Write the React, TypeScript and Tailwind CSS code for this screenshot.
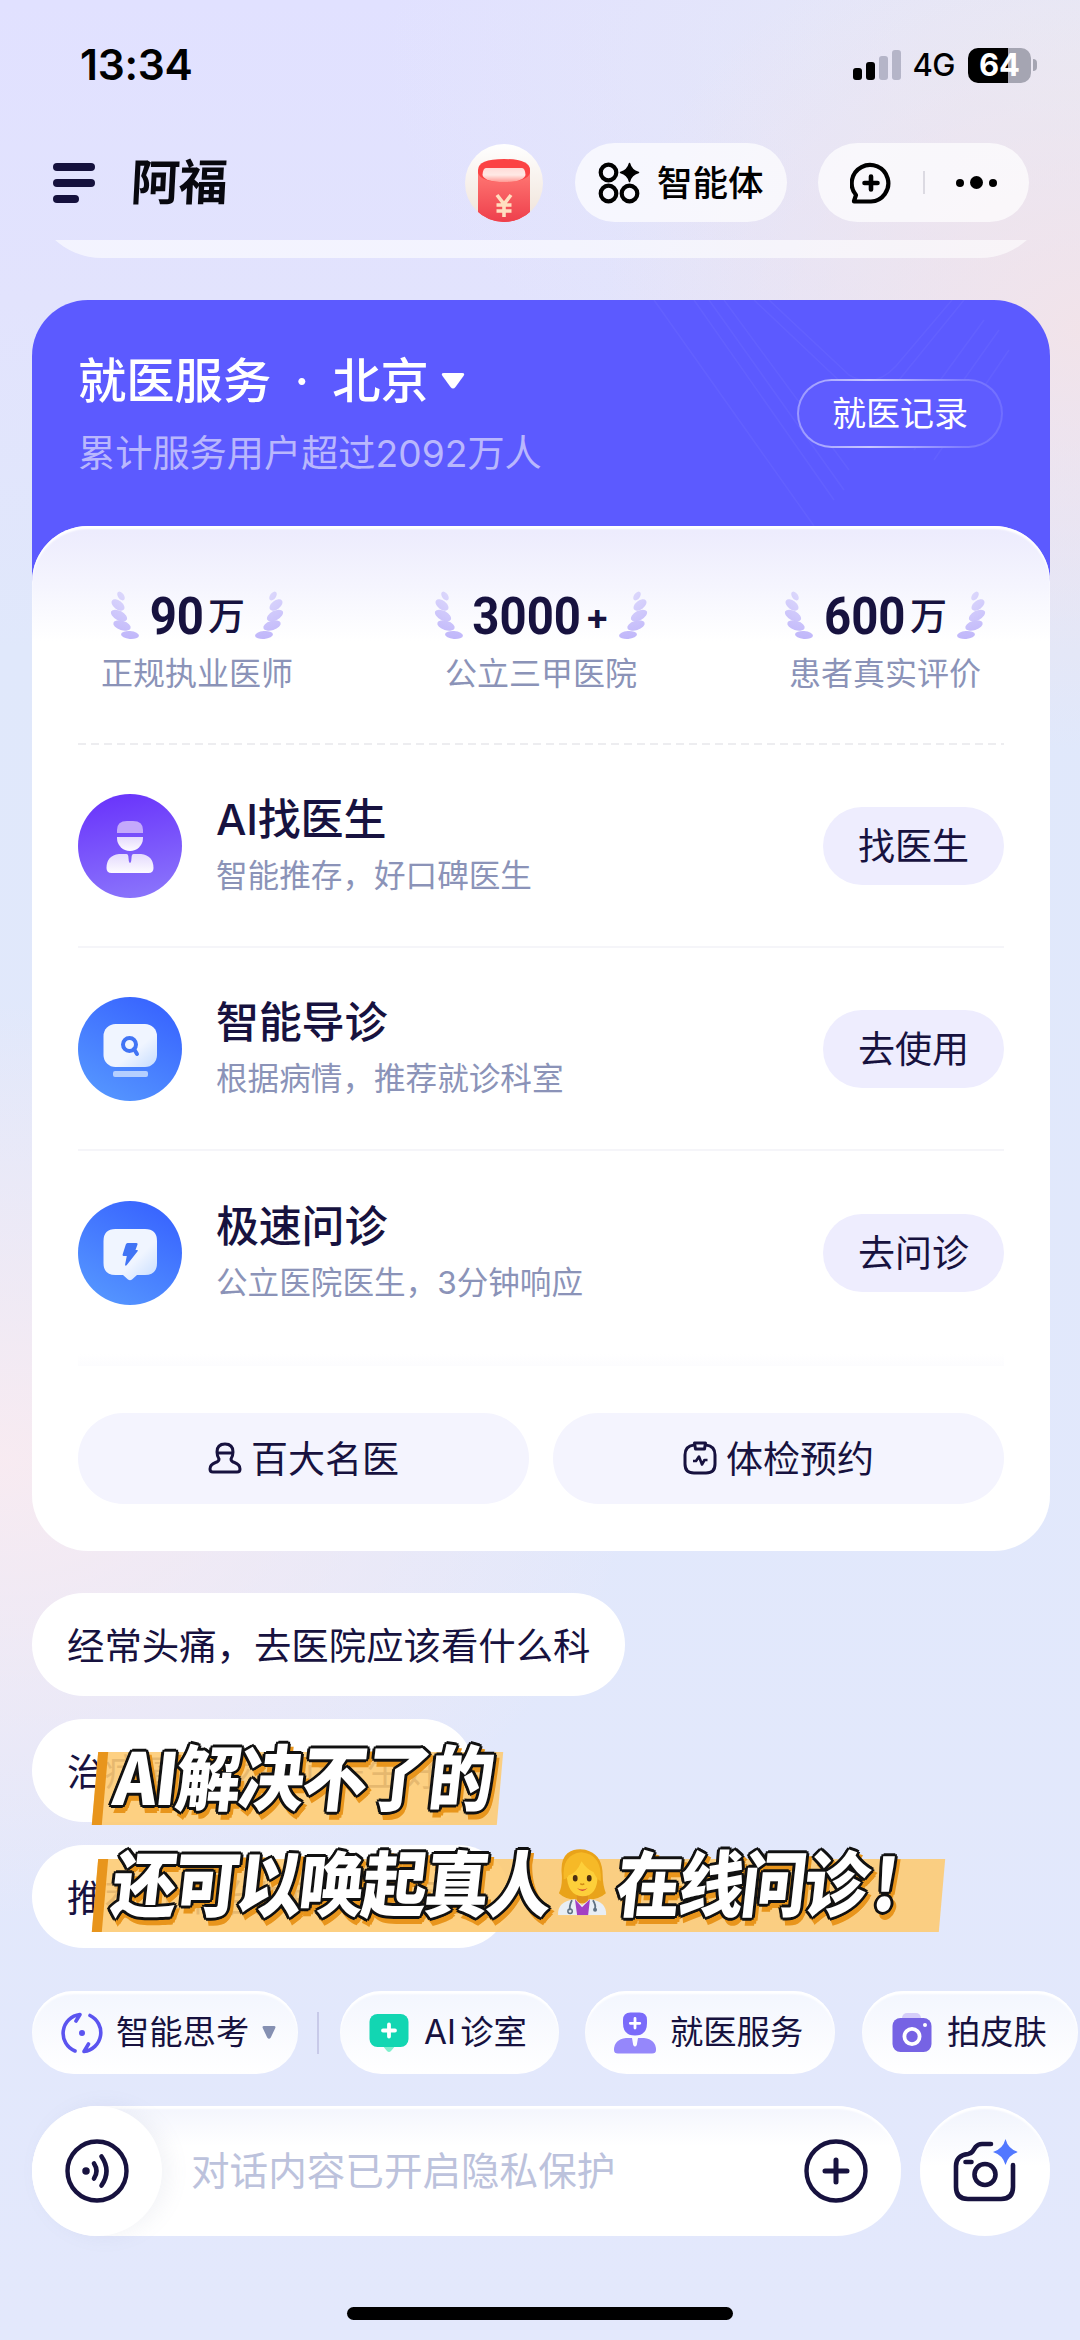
import type { ReactNode } from "react"

interface Stat {
  value: string
  unit: string
  label: string
  digitsClass: string
}

interface Service {
  title: string
  desc: string
  action: string
  icon: ReactNode
}

const stats: Stat[] = [
  { value: "90", unit: "万", label: "正规执业医师", digitsClass: "w-[55px]" },
  { value: "3000", unit: "+", label: "公立三甲医院", digitsClass: "w-[108px]" },
  { value: "600", unit: "万", label: "患者真实评价", digitsClass: "w-[83px]" },
]

const services: Service[] = [
  { title: "AI找医生", desc: "智能推存，好口碑医生", action: "找医生", icon: <DoctorIcon /> },
  { title: "智能导诊", desc: "根据病情，推荐就诊科室", action: "去使用", icon: <GuideIcon /> },
  { title: "极速问诊", desc: "公立医院医生，3分钟响应", action: "去问诊", icon: <FlashIcon /> },
]

function DoctorIcon() {
  return (
    <svg viewBox="0 0 104 104" className="h-[104px] w-[104px]">
      <defs>
        <linearGradient id="doc-bg" x1="0.4" y1="0" x2="0.6" y2="1">
          <stop offset="0" stopColor="#6a35fb" />
          <stop offset="1" stopColor="#8a74fb" />
        </linearGradient>
        <linearGradient id="doc-fg" x1="0" y1="0" x2="0" y2="1">
          <stop offset="0" stopColor="#e4dafd" />
          <stop offset="1" stopColor="#fdfbff" />
        </linearGradient>
      </defs>
      <circle cx="52" cy="52" r="52" fill="url(#doc-bg)" />
      <path d="M39 39 v-3 q0 -9 10 -9 h6 q10 0 10 9 v3 z" fill="#c4a9fb" />
      <path d="M39 43 h26 v1 a13 13 0 0 1 -26 0 z" fill="url(#doc-fg)" />
      <path
        d="M41 60 h7.500 q1.500 0 1.800 2 l0.500 5 q1.200 4 2.400 0 l0.500 -5 q0.300 -2 1.800 -2 h7.500 q12.500 1.500 12.500 14 q0 5 -5 5 h-37 q-5 0 -5 -5 q0 -12.500 12.500 -14 z"
        fill="url(#doc-fg)"
      />
    </svg>
  )
}

function BlueDefs({ id }: { id: string }) {
  return (
    <defs>
      <linearGradient id={id} x1="0.8" y1="0" x2="0.25" y2="1">
        <stop offset="0" stopColor="#3762ff" />
        <stop offset="1" stopColor="#5596ff" />
      </linearGradient>
      <linearGradient id={`${id}-fg`} x1="0" y1="0" x2="1" y2="1">
        <stop offset="0.6" stopColor="#f0f5ff" />
        <stop offset="1" stopColor="#c5dcff" />
      </linearGradient>
    </defs>
  )
}

function GuideIcon() {
  return (
    <svg viewBox="0 0 104 104" className="h-[104px] w-[104px]">
      <BlueDefs id="guide" />
      <circle cx="52" cy="52" r="52" fill="url(#guide)" />
      <rect x="25.500" y="27" width="53.500" height="43" rx="12" fill="url(#guide-fg)" />
      <rect x="35" y="74" width="35" height="6" rx="2" fill="#b5cfff" />
      <circle cx="51.500" cy="47.500" r="6.500" fill="none" stroke="#4174f5" strokeWidth="4" />
      <path d="M56 52 l3 5" stroke="#4174f5" strokeWidth="4" strokeLinecap="round" />
    </svg>
  )
}

function FlashIcon() {
  return (
    <svg viewBox="0 0 104 104" className="h-[104px] w-[104px]">
      <BlueDefs id="flash" />
      <circle cx="52" cy="52" r="52" fill="url(#flash)" />
      <path
        d="M37.500 28 h29.500 q12 0 12 12 v22 q0 12 -12 12 h-8 l-5 4.500 q-2 1.600 -4 0 l-5 -4.500 h-7.500 q-12 0 -12 -12 v-22 q0 -12 12 -12 z"
        fill="url(#flash-fg)"
      />
      <path
        d="M49.500 42 h9 q1.500 0 1 1.500 l-2 5.500 h1.500 q1.500 0 0.600 1.300 l-11 14 q-1.500 1.200 -1.500 -0.800 l1.700 -8.500 h-3 q-1.500 0 -1.200 -1.500 l3.200 -10 q0.500 -1.500 1.700 -1.500 z"
        fill="#4174f5"
      />
    </svg>
  )
}

function Wreath({ className = "", id }: { className?: string; id: string }) {
  return (
    <svg viewBox="0 0 30 50" className={`h-[50px] w-[30px] shrink-0 ${className}`}>
      <defs>
        <linearGradient id={id} x1="0" y1="0" x2="0" y2="50" gradientUnits="userSpaceOnUse">
          <stop offset="0" stopColor="#dcd8fc" />
          <stop offset="1" stopColor="#bfb5fa" />
        </linearGradient>
      </defs>
      <g fill={`url(#${id})`}>
        <ellipse cx="11" cy="5" rx="5" ry="3" transform="rotate(55 11 5)" />
        <ellipse cx="8" cy="14" rx="7.500" ry="4.300" transform="rotate(38 8 14)" />
        <ellipse cx="9" cy="24.500" rx="8.800" ry="4.700" transform="rotate(28 9 24.500)" />
        <ellipse cx="12" cy="34.500" rx="9" ry="4.600" transform="rotate(17 12 34.500)" />
        <ellipse cx="20" cy="44" rx="9" ry="3.900" transform="rotate(4 20 44)" />
      </g>
    </svg>
  )
}

function DoctorEmoji() {
  return (
    <svg viewBox="0 0 50 66" role="img" aria-label="👩‍⚕️" className="h-[66px] w-[50px]">
      <path d="M11 4 Q22 -3 33 2 Q46 7 46 26 Q46 36 49 44 Q40 52 25 50 Q10 52 2 44 Q6 36 5 24 Q4 10 11 4 z" fill="#e9a31a" />
      <path d="M20 42 h11 v12 h-11 z" fill="#e0921d" />
      <path d="M1 66 Q0 52 18 50 L25 56 L33 50 Q50 52 49 66 z" fill="#e8eef5" />
      <path d="M18 50 L25 58 L33 50 L31 66 H20 z" fill="#a33fc4" />
      <path d="M10 24 Q10 8 25 8 Q41 8 41 25 Q41 47 25.500 47 Q10 46 10 24 z" fill="#fdcf3a" />
      <path d="M7 30 Q5 5 25 3 Q46 5 44 32 Q40 30 37 23 Q30 20 25 12 Q20 24 12 26 Q10 30 7 30 z" fill="#f6b927" />
      <ellipse cx="18.500" cy="29" rx="2.400" ry="3.200" fill="#4c2f12" />
      <ellipse cx="32.500" cy="29" rx="2.400" ry="3.200" fill="#4c2f12" />
      <path d="M23.500 34.500 q2 1.500 4 0" stroke="#d08a17" strokeWidth="1.500" fill="none" />
      <path d="M20 38.500 q5.500 3.800 11 0 q-5.500 6.500 -11 0 z" fill="#d5473a" />
      <path d="M15 51 q-3 6 -2 10 M36 51 q3 5 2 8" stroke="#5f7183" strokeWidth="1.800" fill="none" />
      <circle cx="13" cy="62" r="2.200" fill="none" stroke="#5f7183" strokeWidth="1.500" />
      <circle cx="38" cy="60.500" r="2" fill="#5f7183" />
    </svg>
  )
}

function StatusBar() {
  return (
    <div className="flex h-[130px] shrink-0 items-center justify-between pl-[80px] pr-[43px] text-black">
      <span className="text-[42.500px] font-semibold tracking-[-0.300px]">13:34</span>
      <div className="flex items-center">
        <div className="flex h-[30px] items-end gap-1">
          <span className="h-3 w-[9px] rounded-[3px] bg-black" />
          <span className="h-[18px] w-[9px] rounded-[3px] bg-black" />
          <span className="h-6 w-[9px] rounded-[3px] bg-[#b5b5c8]" />
          <span className="h-[30px] w-[9px] rounded-[3px] bg-[#b5b5c8]" />
        </div>
        <span className="ml-[11px] text-[31px] font-medium tracking-[-0.500px]">4G</span>
        <div className="ml-[13px] flex h-[35px] w-[63px] items-center justify-center rounded-[10px] bg-[linear-gradient(90deg,#000_0_64%,#a5a5b2_64%)] text-[31px] font-bold text-white">
          64
        </div>
        <span className="ml-[2px] h-[12px] w-[4px] rounded-r-full bg-[#a5a5b2]" />
      </div>
    </div>
  )
}

function Header() {
  return (
    <div className="mt-[13px] flex h-[79px] shrink-0 items-center pl-[53px] pr-[51px]">
      <div className="flex flex-col gap-2">
        <span className="h-2 w-[42px] rounded-full bg-[#15113d]" />
        <span className="h-2 w-[42px] rounded-full bg-[#15113d]" />
        <span className="h-2 w-[26px] rounded-full bg-[#15113d]" />
      </div>
      <span className="ml-[36px] -skew-x-3 text-[49px] font-bold leading-[60px] tracking-[-1px] text-[#08080f]">阿福</span>

      <svg viewBox="0 0 78 78" className="ml-auto h-[78px] w-[78px]">
        <defs>
          <clipPath id="packet-clip">
            <circle cx="39" cy="39" r="39" />
          </clipPath>
          <linearGradient id="packet-bg" x1="0" y1="0" x2="0" y2="1">
            <stop offset="0" stopColor="#ffffff" />
            <stop offset="1" stopColor="#efe2d8" />
          </linearGradient>
          <linearGradient id="packet-body" x1="0" y1="0" x2="0" y2="1">
            <stop offset="0" stopColor="#ff7672" />
            <stop offset="1" stopColor="#ee3f4c" />
          </linearGradient>
          <linearGradient id="packet-lip" x1="0" y1="0" x2="0" y2="1">
            <stop offset="0" stopColor="#ffdcd8" />
            <stop offset="0.5" stopColor="#ffe9e5" />
            <stop offset="1" stopColor="#ff9a94" />
          </linearGradient>
        </defs>
        <g clipPath="url(#packet-clip)">
          <rect width="78" height="78" fill="url(#packet-bg)" />
          <path d="M13 26 q0 -11 26 -11 q26 0 26 11 v52 h-52 z" fill="#fb4344" />
          <path d="M13 29 q3 9 26 9 q23 0 26 -9 v49 h-52 z" fill="url(#packet-body)" />
          <path d="M21 24 h36 q3 0 3.500 7 q-2 7 -21.500 7 q-19.500 0 -21.500 -7 q0.500 -7 3.500 -7 z" fill="url(#packet-lip)" />
          <path d="M32 51 l7 9 l7 -9 M39 60 v13 M31.500 61 h15 M31.500 67 h15" fill="none" stroke="#ffdfc0" strokeWidth="3.600" />
        </g>
      </svg>

      <div className="ml-[32px] flex h-[79px] w-[212px] items-center rounded-full bg-white/70 pl-[23px]">
        <svg viewBox="0 0 42 42" className="h-[42px] w-[42px]" fill="none" stroke="#000" strokeWidth="4.200">
          <circle cx="10.500" cy="10.500" r="7.800" />
          <circle cx="10.500" cy="31.500" r="7.800" />
          <circle cx="31.500" cy="31.500" r="7.800" />
          <path
            d="M31.500 1.500 q1.800 7.200 9 9 q-7.200 1.800 -9 9 q-1.800 -7.200 -9 -9 q7.200 -1.800 9 -9 z"
            fill="#000"
            strokeWidth="1.500"
            strokeLinejoin="round"
          />
        </svg>
        <span className="ml-[17px] pt-[2px] text-[35.500px] font-medium text-black">智能体</span>
      </div>

      <div className="ml-[31px] flex h-[79px] w-[211px] items-center rounded-full bg-white/70 pl-[32px]">
        <svg
          viewBox="0 0 42 42"
          className="h-[42px] w-[42px]"
          fill="none"
          stroke="#000"
          strokeWidth="4.200"
          strokeLinejoin="round"
          strokeLinecap="round"
        >
          <path d="M4 39.500 v-0.500 l2 -6 a18.300 18.300 0 1 1 15 6.500 z" />
          <path d="M21 14.500 v13 M14.500 21 h13" strokeWidth="4.600" />
        </svg>
        <span className="ml-[31px] h-[23px] w-[2px] bg-[#dcdae2]" />
        <div className="ml-[31px] flex items-center gap-[6px]">
          <span className="h-2 w-2 rounded-full bg-black" />
          <span className="h-[13px] w-[13px] rounded-full bg-black" />
          <span className="h-2 w-2 rounded-full bg-black" />
        </div>
      </div>
    </div>
  )
}

function CardHeader() {
  return (
    <div className="relative flex h-[226px] justify-between pl-[46px] pr-[47px]">
      <svg viewBox="0 0 400 226" className="absolute right-4 top-0 h-[226px] w-[400px]" fill="none" stroke="#6d6bff" strokeWidth="1.500" opacity="0.4">
        <path d="M20 0 L180 226 M60 0 L200 200 M75 0 L210 190 M90 0 L215 170 M120 0 L215 90 Q240 105 265 80 L330 0 M135 0 L215 75 Q240 90 262 66 L318 0 M350 20 L270 130 M365 30 L280 150 M375 50 L300 160" />
      </svg>
      <div className="relative pt-[46px]">
        <div className="flex items-center text-[48.300px] font-medium leading-[70px] text-white">
          <span>就医服务</span>
          <span className="w-[61px] text-center">·</span>
          <span>北京</span>
          <svg viewBox="0 0 24 18" className="ml-[12px] h-[18px] w-6" fill="#fff">
            <path d="M3 1 h18 q3.500 0 1.500 3 l-8 11 q-2.500 3 -5 0 l-8 -11 q-2 -3 1.500 -3 z" />
          </svg>
        </div>
        <div className="mt-[11px] text-[37.200px] leading-[54px] text-[#b9b7fd]">累计服务用户超过2092万人</div>
      </div>
      <div className="relative mt-[79px] h-[69px] w-[206px] rounded-full bg-[linear-gradient(90deg,#9a98ff,#c9c8ff_35%,#7f7dff_80%,#706eff)] p-[2px]">
        <div className="flex h-full items-center justify-center rounded-full bg-[#5f5cff] text-[34px] text-white">就医记录</div>
      </div>
    </div>
  )
}

function StatsRow() {
  return (
    <div className="flex justify-between px-6 pt-[63px]">
      {stats.map((stat) => (
        <div key={stat.label} className="flex w-[190px] flex-col items-center">
          <div className="flex h-[54px] items-center">
            <Wreath id={`wreath-l-${stat.value}`} />
            <div className="mx-[9px] flex items-center text-[#17123f]">
              <span className={`flex justify-center ${stat.digitsClass}`}>
                <span className="scale-x-[0.91] pt-[2px] font-['Roboto'] text-[52px] font-bold leading-[54px]">{stat.value}</span>
              </span>
              <span
                className={
                  stat.unit === "+"
                    ? "ml-[4px] w-[24px] text-center text-[36px] font-bold leading-[54px]"
                    : "ml-1 pt-[2px] text-[37px] font-medium leading-[54px]"
                }
              >
                {stat.unit}
              </span>
            </div>
            <Wreath id={`wreath-r-${stat.value}`} className="-scale-x-100" />
          </div>
          <span className="mt-[9px] whitespace-nowrap text-[32px] leading-[44px] text-[#8b93b8]">{stat.label}</span>
        </div>
      ))}
    </div>
  )
}

function ServiceCard() {
  return (
    <section className="mx-[32px] mt-[42px] h-[1251px] w-[1018px] shrink-0 rounded-t-[56px] rounded-b-[66px] bg-[linear-gradient(#5c5aff_0_340px,transparent_340px)]">
      <CardHeader />
      <div className="flex h-[1025px] flex-col rounded-[56px] bg-[linear-gradient(#ecebfd,#f5f5fe_60px,#fff_115px)] px-[46px] shadow-[inset_0_3px_2px_#fff]">
        <StatsRow />
        <div className="mt-[47px] h-[2px] shrink-0 bg-[repeating-linear-gradient(90deg,#ededf0_0_8px,transparent_8px_13px)]" />

        {services.map((service, i) => (
          <div key={service.title} className={`flex h-[203px] items-center ${i < 2 ? "border-b-2 border-[#f5f5f9]" : ""}`}>
            {service.icon}
            <div className="ml-[34px] flex flex-col">
              <span className="text-[43px] font-medium leading-[56px] tracking-[-0.200px] text-[#17123f]">{service.title}</span>
              <span className="mt-[5px] text-[31.600px] leading-[48px] text-[#8b93b8]">{service.desc}</span>
            </div>
            <button className="ml-auto h-[78px] w-[181px] rounded-full bg-[#eeedfe] pt-[2px] text-[37px] text-[#17123f]">
              {service.action}
            </button>
          </div>
        ))}

        <div className="h-3 bg-[linear-gradient(#fff,#fcfcfe)]" />

        <div className="mt-[47px] flex gap-[24px] text-[37px] text-[#17123f]">
          <button className="flex h-[91px] flex-1 items-center justify-center rounded-full bg-[#f4f4fe] pt-[2px]">
            <svg viewBox="0 0 34 32" className="mb-[3px] mr-[9px] h-[32px] w-[34px]" fill="none" stroke="#17123f" strokeWidth="3">
              <path d="M9 10 q0 -8 8 -8 q8 0 8 8 q0 4 -2 7 q0 2.500 3.500 3.500 q5.500 2 5.500 6.500 q0 3 -3 3 h-24 q-3 0 -3 -3 q0 -4.500 5.500 -6.500 q3.500 -1 3.500 -3.500 q-2 -3 -2 -7 z M9 11 h16" />
            </svg>
            百大名医
          </button>
          <button className="flex h-[91px] flex-1 items-center justify-center rounded-full bg-[#f4f4fe] pt-[2px]">
            <svg viewBox="0 0 34 34" className="mb-[3px] mr-[9px] h-[34px] w-[34px]" fill="none" stroke="#17123f" strokeWidth="3" strokeLinejoin="round">
              <path d="M11 4 q-9 1 -9 10 v9 q0 9 9 9 h12 q9 0 9 -9 v-9 q0 -9 -9 -10" />
              <path d="M11.500 2 h11 l-1 6 h-9 z" />
              <path d="M10 20 h3 l3 -4.500 l3 8 l2.500 -4.500 h3" strokeWidth="2.600" />
            </svg>
            体检预约
          </button>
        </div>
      </div>
    </section>
  )
}

function SuggestionList() {
  const chip = "flex h-[103px] items-center whitespace-nowrap rounded-full bg-white pl-[35px] pt-[5px] text-[37.400px] text-[#17123f]"
  return (
    <div className="mt-[42px] flex shrink-0 flex-col gap-[23px] pl-[32px]">
      <div className={`${chip} w-[593px]`}>经常头痛，去医院应该看什么科</div>
      <div className={`${chip} w-[442px]`}>治疗痛风找哪个医生好</div>
      <div className={`${chip} w-[478px]`}>推荐几个治失眠的好医生</div>
    </div>
  )
}

// Caption sticker floating over the suggestions
function Caption() {
  const outline =
    "relative whitespace-nowrap font-black text-white [text-shadow:3px_0_0_#111,-3px_0_0_#111,0_3px_0_#111,0_-3px_0_#111,2px_2px_0_#111,-2px_2px_0_#111,2px_-2px_0_#111,-2px_-2px_0_#111,5px_6px_0_#e8951c,6px_3px_0_#e8951c,3px_7px_0_#e8951c]"
  const bar = "absolute -skew-x-[5deg] border-l-[10px] border-[#e8951c] bg-[#fdcb74]/90"
  return (
    <div className="absolute left-0 top-[1730px] h-[210px] w-full font-['Noto_Sans_CJK_SC',sans-serif]">
      <div className={`${bar} left-[95px] top-[22px] h-[73px] w-[405px]`} />
      <div className={`${bar} left-[95px] top-[129px] h-[73px] w-[847px]`} />
      <div className="absolute left-[115px] top-[2px] -skew-x-[7deg] scale-y-[1.1] text-[65px] leading-[84px]">
        <span className={`${outline} tracking-[-1.800px]`}>AI解决不了的</span>
      </div>
      <div className="absolute left-[113px] top-[108px] flex -skew-x-[7deg] scale-y-[1.1] items-center text-[65px] leading-[84px]">
        <span className={`${outline} tracking-[-2.500px]`}>还可以唤起真人</span>
        <span className="relative ml-[6px] mr-[11px] mt-[4px] scale-y-[0.91] skew-x-[7deg]">
          <DoctorEmoji />
        </span>
        <span className={`${outline} tracking-[-2.500px]`}>在线问诊</span>
        <span className={`${outline} ml-[6px]`}>!</span>
      </div>
    </div>
  )
}

function Toolbar() {
  const chip =
    "flex h-[83px] shrink-0 items-center whitespace-nowrap rounded-full bg-[linear-gradient(#f3f6fe,#fff)] text-[33.300px] text-[#17123f] shadow-[inset_0_3px_2px_#fff]"
  return (
    <div className="mt-[43px] flex shrink-0 items-center overflow-hidden pl-[32px]">
      <div className={`${chip} w-[266px] pl-[27px]`}>
        <svg viewBox="0 0 46 42" className="h-[42px] w-[46px]" fill="none" stroke="#5b54f0" strokeWidth="3.600" strokeLinecap="round" strokeLinejoin="round">
          <path d="M16 39 A19 19 0 0 1 21 2.500 L17 9" />
          <path d="M31 3.500 A19 19 0 0 1 25 39.500 L29.500 32" />
          <circle cx="23" cy="21" r="1.500" fill="#5b54f0" strokeWidth="3" />
        </svg>
        <span className="ml-[11px]">智能思考</span>
        <svg viewBox="0 0 14 13" className="ml-[13px] h-[13px] w-[14px]" fill="#8590b2">
          <path d="M2 0 h10 q2 0 1.300 2 l-4.500 9.500 q-1.800 2.500 -3.600 0 l-4.500 -9.500 q-0.700 -2 1.300 -2 z" />
        </svg>
      </div>
      <span className="ml-[19px] h-[42px] w-[2px] bg-[#c8cae9]" />
      <div className={`${chip} ml-[21px] w-[219px] pl-[29px]`}>
        <svg viewBox="0 0 40 38" className="h-[38px] w-10">
          <path d="M13 31 h14 l-5 6 q-2 2 -4 0 z" fill="#7df0cd" />
          <rect x="0.500" y="0" width="39" height="33" rx="8" fill="#12d6b2" />
          <path d="M20 10.500 v12 M14 16.500 h12" stroke="#fff" strokeWidth="3.800" strokeLinecap="round" />
        </svg>
        <span className="ml-[15px] [word-spacing:-5px]">AI 诊室</span>
      </div>
      <div className={`${chip} ml-[26px] w-[250px] pl-[29px]`}>
        <svg viewBox="0 0 42 42" className="h-[42px] w-[42px]">
          <path d="M9 8 q0 -7.500 7.500 -7.500 h9 q7.500 0 7.500 7.500 v3 q0 12.500 -12 12.500 q-12 0 -12 -12.500 z" fill="#7a6bfa" />
          <path d="M21 6.500 v9.500 M16.300 11.300 h9.500" stroke="#fff" strokeWidth="2.800" strokeLinecap="round" />
          <path d="M12 26 h6 l1.200 7 q1.800 3 3.600 0 l1.200 -7 h6 q12 1.500 12 12 q0 3.500 -4 3.500 h-34 q-4 0 -4 -3.500 q0 -10.500 12 -12 z" fill="#9587fb" />
        </svg>
        <span className="ml-[14px]">就医服务</span>
      </div>
      <div className={`${chip} ml-[27px] w-[216px] pl-[30px]`}>
        <svg viewBox="0 0 40 40" className="h-10 w-10">
          <rect x="10" y="0" width="19" height="12" rx="5" fill="#d5cdfa" />
          <rect x="0.500" y="5" width="39" height="34" rx="8" fill="#7663e4" />
          <circle cx="20" cy="23.500" r="7.600" fill="none" stroke="#fff" strokeWidth="3.800" />
          <circle cx="33" cy="12" r="2" fill="#fff" />
        </svg>
        <span className="ml-[15px]">拍皮肤</span>
      </div>
    </div>
  )
}

function InputBar() {
  return (
    <div className="mt-[32px] flex h-[130px] shrink-0 gap-[19px] pl-[32px]">
      <div className="flex w-[869px] items-center rounded-full bg-[linear-gradient(#f3f5fd,#fff_40px)] shadow-[inset_0_3px_2px_#fff]">
        <div className="flex h-[130px] w-[130px] items-center justify-center rounded-full bg-white shadow-[8px_0_20px_rgba(120,130,170,0.09)]">
          <svg viewBox="0 0 64 64" className="h-[64px] w-[64px]" fill="none" stroke="#17123f" strokeWidth="4.400" strokeLinecap="round">
            <circle cx="32" cy="32" r="29.500" />
            <circle cx="21" cy="32" r="2" fill="#17123f" strokeWidth="3.500" />
            <path d="M29 24.500 q5 7.500 0 15 M36.500 17.500 q10 14.500 0 29" strokeWidth="4.600" />
          </svg>
        </div>
        <span className="ml-[29px] pt-[2px] text-[38.600px] text-[#bcc2dc]">对话内容已开启隐私保护</span>
        <svg viewBox="0 0 64 64" className="ml-auto mr-[33px] h-[64px] w-[64px]" fill="none" stroke="#17123f" strokeWidth="4.400" strokeLinecap="round">
          <circle cx="32" cy="32" r="29.500" />
          <path d="M32 21 v22 M21 32 h22" strokeWidth="5" />
        </svg>
      </div>
      <div className="flex w-[130px] items-center justify-center rounded-full bg-[linear-gradient(#f1f4fd,#fff_60px)] shadow-[inset_0_3px_2px_#fff]">
        <svg viewBox="0 0 66 64" className="h-[64px] w-[66px]" fill="none" stroke="#17123f" strokeWidth="4.600" strokeLinecap="round">
          <path d="M39 5 h-9 q-4 0 -6.500 3 l-3 4.500 q-1.500 2 -4.500 2.500 q-12 1.500 -12 12 v21 q0 12 12 12 h33 q12 0 12 -12 v-22" strokeLinejoin="round" />
          <circle cx="33" cy="35.500" r="10.500" />
          <path d="M13.500 23 h6" />
          <path d="M53.500 0 q2.600 10 12.500 13 q-9.900 3 -12.500 13 q-2.600 -10 -12.500 -13 q9.900 -3 12.500 -13 z" fill="#5278ff" stroke="none" />
        </svg>
      </div>
    </div>
  )
}

export default function App() {
  return (
    <main className="relative flex h-[2340px] w-[1080px] flex-col overflow-hidden bg-[radial-gradient(480px_420px_at_1080px_330px,rgba(243,227,232,0.9),rgba(243,227,232,0)),radial-gradient(640px_460px_at_0px_1460px,rgba(250,235,240,0.9),rgba(250,235,240,0)),radial-gradient(700px_420px_at_1080px_60px,rgba(231,234,245,0.9),rgba(231,234,245,0)),linear-gradient(#e1e1ff,#e2e3fd_300px,#e0e8fb_650px,#e3e8fc)] font-['Inter','Noto_Sans_CJK_SC',sans-serif]">
      <StatusBar />
      <Header />
      {/* Bottom edge of the previous message */}
      <div className="mx-[32px] mt-[18px] flex h-[18px] w-[1018px] shrink-0 items-end overflow-hidden">
        <div className="h-[160px] w-full shrink-0 rounded-[70px] bg-white/60" />
      </div>
      <ServiceCard />
      <SuggestionList />
      <Caption />
      <Toolbar />
      <InputBar />
      <div className="mx-auto mt-[71px] h-[13px] w-[386px] shrink-0 rounded-full bg-black" />
    </main>
  )
}
